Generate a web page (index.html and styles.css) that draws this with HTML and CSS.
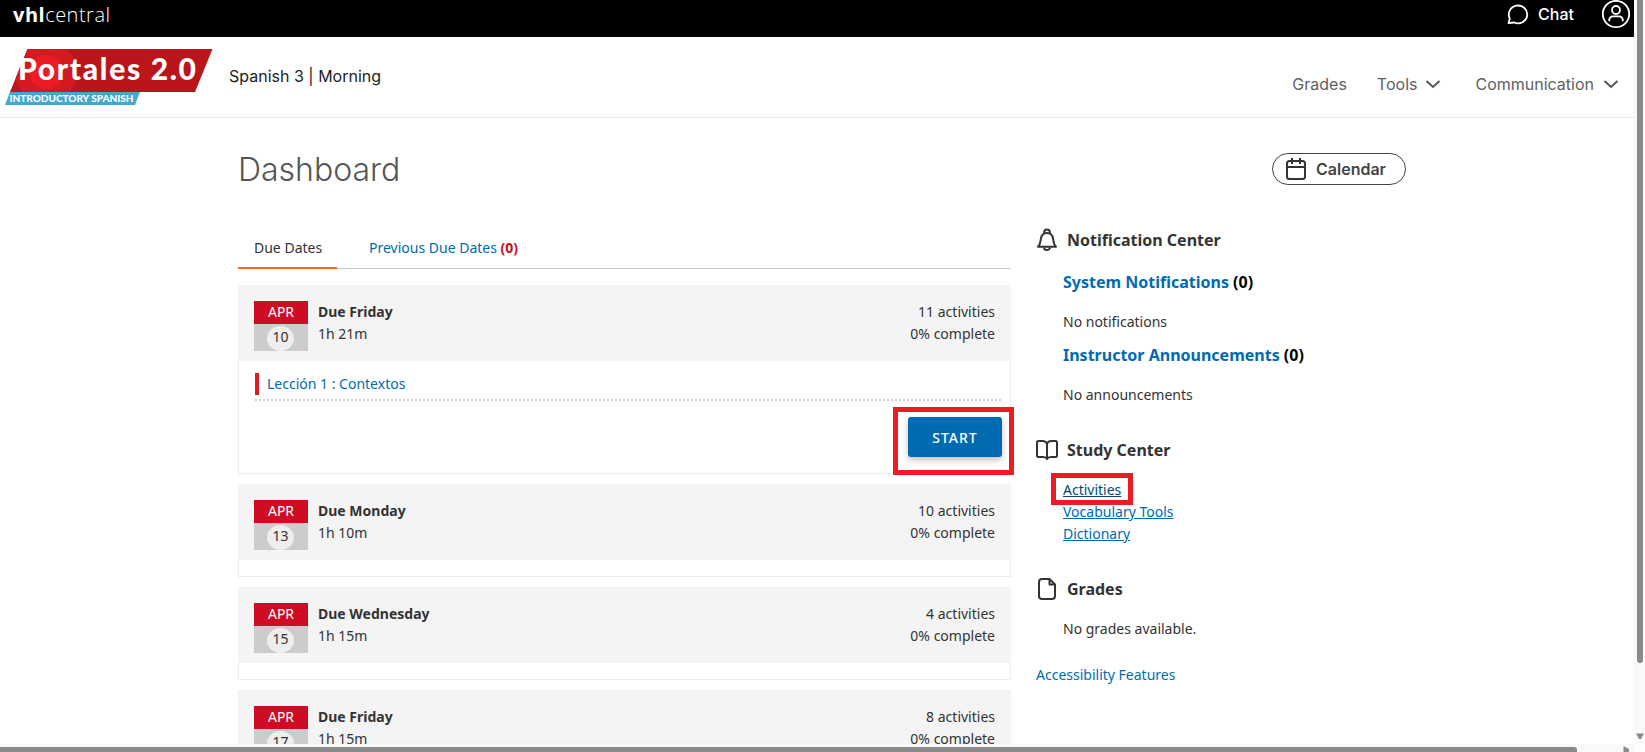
FILE: index.html
```html
<!DOCTYPE html>
<html lang="en">
<head>
    <meta charset="UTF-8">
    <meta name="viewport" content="width=device-width, initial-scale=1.0">
    <title>Dashboard | vhlcentral</title>
    <link rel="stylesheet" href="styles.css">
</head>
<body>
    <div class="viewport">
        <div class="topbar">
            <div class="brand"><b>vhl</b>central</div>
            <div class="topbar-right">
                <svg class="chat-icon" width="22" height="22" viewBox="0 0 22 22">
                    <path d="M1.5 20.2 L2.8 15.4 A9.2 8.9 0 1 1 7.2 19.5 Z"/>
                </svg>
                <span class="chat">Chat</span>
                <svg class="user-icon" width="30" height="30" viewBox="0 0 30 30">
                    <circle cx="15" cy="15" r="13.2"/>
                    <circle cx="15" cy="11" r="4"/>
                    <path d="M8.2 22.3 V21 a4 4 0 0 1 4-3.7 h5.6 a4 4 0 0 1 4 3.7 V22.3"/>
                </svg>
            </div>
        </div>

        <header class="header">
            <svg class="logo" width="208" height="56" viewBox="0 0 208 56">
                <defs>
                    <clipPath id="logo-shape"><path d="M22.5 0 H207.5 L190 43 H5 Z"/></clipPath>
                </defs>
                <g clip-path="url(#logo-shape)">
                    <rect width="208" height="43" fill="#b9151b"/>
                    <circle cx="41" cy="23" r="31" fill="#d31a20"/>
                    <circle cx="41" cy="23" r="17" fill="#ed1c24"/>
                </g>
                <path d="M5 43 H135 L130 56 H0 Z" fill="#43a9cc"/>
                <text class="logo-title" x="13" y="30.5" textLength="178">Portales 2.0</text>
                <text class="logo-sub" x="4.5" y="53" textLength="124" lengthAdjust="spacingAndGlyphs">INTRODUCTORY SPANISH</text>
            </svg>
            <div class="course">Spanish 3 | Morning</div>
            <nav class="nav">
                <a>Grades</a>
                <a class="tools">Tools <svg class="chevron" width="16" height="10" viewBox="0 0 16 10"><path d="M1.5 2 L8 8 L14.5 2"/></svg></a>
                <a>Communication <svg class="chevron" width="16" height="10" viewBox="0 0 16 10"><path d="M1.5 2 L8 8 L14.5 2"/></svg></a>
            </nav>
        </header>

        <div class="page">
            <div class="page-head">
                <h1>Dashboard</h1>
                <button class="calendar">
                    <svg width="22" height="24" viewBox="0 0 22 24">
                        <rect x="2" y="4" width="18" height="18" rx="2.5"/>
                        <path d="M2 10 H20 M7 1 V7 M15 1 V7"/>
                    </svg>
                    Calendar
                </button>
            </div>

            <div class="columns">
                <main class="due">
                    <div class="tabs">
                        <div class="tab active">Due Dates</div>
                        <div class="tab">Previous Due Dates <b>(0)</b></div>
                    </div>

                    <section class="card">
                        <div class="card-head">
                            <div class="date"><div class="month">APR</div><div class="day"><span>10</span></div></div>
                            <div class="info"><b>Due Friday</b><br>1h 21m</div>
                            <div class="stats">11 activities<br>0% complete</div>
                        </div>
                        <div class="card-body open">
                            <div class="lesson"><a>Lección 1 : Contextos</a></div>
                            <div class="start-wrap">
                                <button class="start">START</button>
                                <div class="marker marker-start"></div>
                            </div>
                        </div>
                    </section>

                    <section class="card">
                        <div class="card-head">
                            <div class="date"><div class="month">APR</div><div class="day"><span>13</span></div></div>
                            <div class="info"><b>Due Monday</b><br>1h 10m</div>
                            <div class="stats">10 activities<br>0% complete</div>
                        </div>
                        <div class="card-body"></div>
                    </section>

                    <section class="card">
                        <div class="card-head">
                            <div class="date"><div class="month">APR</div><div class="day"><span>15</span></div></div>
                            <div class="info"><b>Due Wednesday</b><br>1h 15m</div>
                            <div class="stats">4 activities<br>0% complete</div>
                        </div>
                        <div class="card-body"></div>
                    </section>

                    <section class="card">
                        <div class="card-head">
                            <div class="date"><div class="month">APR</div><div class="day"><span>17</span></div></div>
                            <div class="info"><b>Due Friday</b><br>1h 15m</div>
                            <div class="stats">8 activities<br>0% complete</div>
                        </div>
                        <div class="card-body"></div>
                    </section>
                </main>

                <aside class="sidebar">
                    <h2>
                        <svg width="22" height="24" viewBox="0 0 22 24">
                            <path d="M2 18.8 C4.5 16.5 4.3 14 4.8 11 C5.3 7.5 7.5 5 11 5 C14.5 5 16.7 7.5 17.2 11 C17.7 14 17.5 16.5 20 18.8 Z"/>
                            <path d="M8.2 5.3 V4 a2.8 2.6 0 0 1 5.6 0 V5.3 M8 19.5 a3 2.6 0 0 0 6 0"/>
                        </svg>
                        Notification Center
                    </h2>
                    <div class="section notices">
                        <h3><a>System Notifications</a> (0)</h3>
                        <p>No notifications</p>
                        <h3><a>Instructor Announcements</a> (0)</h3>
                        <p>No announcements</p>
                    </div>

                    <h2>
                        <svg width="22" height="24" viewBox="0 0 22 24">
                            <path d="M11 5.5 C10 3.5 8.5 3 6.5 3 H2.5 Q1 3 1 4.5 V17.5 Q1 19 2.5 19 H7 Q10 19 11 21 Q12 19 15 19 H19.5 Q21 19 21 17.5 V4.5 Q21 3 19.5 3 H15.5 C13.5 3 12 3.5 11 5.5 V20.5"/>
                        </svg>
                        Study Center
                    </h2>
                    <ul class="section links">
                        <li><a class="hovered">Activities</a><div class="marker marker-activities"></div></li>
                        <li><a>Vocabulary Tools</a></li>
                        <li><a>Dictionary</a></li>
                    </ul>

                    <h2>
                        <svg width="22" height="24" viewBox="0 0 22 24">
                            <path d="M6 2 H13.5 L19 7.5 V19 a3 3 0 0 1 -3 3 H6 a3 3 0 0 1 -3 -3 V5 a3 3 0 0 1 3 -3 Z M13.5 2.5 V7.5 H18.5"/>
                        </svg>
                        Grades
                    </h2>
                    <div class="section grades">
                        <p>No grades available.</p>
                    </div>
                    <a class="accessibility">Accessibility Features</a>
                </aside>
            </div>
        </div>
    </div>

    <div class="scroll-y">
        <div class="thumb-y"></div>
        <svg class="arrow-y" width="10" height="7" viewBox="0 0 10 7"><path d="M1 0.5 H9 L6 6 H4 Z"/></svg>
    </div>
    <div class="scroll-x">
        <div class="thumb-x"></div>
        <svg class="arrow-x" width="7" height="8" viewBox="0 0 7 8"><path d="M0.5 0 L6 3 V5.5 L3 8 H0.5 Z"/></svg>
    </div>
</body>
</html>
```

FILE: styles.css
```css
* {
    box-sizing: border-box;
}

body {
    margin: 0;
    height: 752px;
    overflow: hidden;
    display: grid;
    grid-template-columns: 1634px 11px;
    grid-template-rows: 744px 8px;
    background: #fefefe;
    color: #333;
    font-family: 'Noto Sans', 'Open Sans', sans-serif;
    font-size: 14px;
    line-height: 22px;
}

a {
    color: #006bb1;
}

.viewport {
    overflow: hidden;
    background: #fff;
}

/* Top bar */
.topbar {
    height: 37px;
    padding: 0 3px 0 13px;
    display: flex;
    justify-content: space-between;
    background: #000;
    color: #fff;
}

.brand {
    font-family: 'Open Sans', sans-serif;
    font-size: 20px;
    font-weight: 300;
    line-height: 30px;
    letter-spacing: 0.5px;
}

.brand b {
    font-weight: 700;
}

.topbar-right {
    display: flex;
    align-items: center;
    height: 28px;
    font-family: Inter, sans-serif;
    font-size: 16px;
    font-weight: 500;
}

.topbar svg {
    fill: none;
    stroke: #fff;
    stroke-width: 1.8;
    stroke-linejoin: round;
}

.chat {
    margin: 0 27px 0 9px;
}

/* Header */
.header {
    height: 81px;
    padding: 12px 15px 0 5px;
    display: flex;
    align-items: flex-start;
    border-bottom: 1px solid #e8e8e8;
    font-family: Inter, sans-serif;
    font-size: 16px;
}

.logo text {
    fill: #fff;
    font-family: Lato, sans-serif;
    font-weight: 900;
}

.logo-title {
    font-size: 30px;
}

.logo-sub {
    font-size: 10px;
}

.course {
    margin: 16px 0 0 16px;
    color: #1d1d1d;
}

.nav {
    display: flex;
    gap: 30px;
    margin: 24px 0 0 auto;
}

.nav a {
    display: flex;
    align-items: center;
    gap: 9px;
    color: #616161;
}

.nav .tools {
    margin-right: 4px;
    gap: 8px;
}

.chevron {
    fill: none;
    stroke: #555;
    stroke-width: 2;
}

/* Page */
.page {
    width: 1168px;
    margin-left: 238px;
}

.page-head {
    height: 110px;
    padding-top: 35px;
    display: flex;
    justify-content: space-between;
    align-items: flex-start;
}

h1 {
    margin: 0;
    color: #555;
    font-family: Inter, sans-serif;
    font-size: 32px;
    font-weight: 300;
    line-height: 33px;
}

.calendar {
    width: 134px;
    height: 32px;
    padding: 0 0 0 12px;
    display: flex;
    align-items: center;
    gap: 9px;
    border: 1px solid #444;
    border-radius: 16px;
    background: #fff;
    color: #444;
    font-family: Inter, sans-serif;
    font-size: 16px;
    font-weight: 600;
}

.calendar svg,
h2 svg {
    fill: none;
    stroke: #333;
    stroke-width: 2;
    stroke-linejoin: round;
}

.columns {
    display: flex;
    gap: 25px;
}

.due {
    width: 773px;
}

.tabs {
    display: flex;
    height: 41px;
    margin-bottom: 16px;
    border-bottom: 1px solid #ccc;
    white-space: nowrap;
}

.tab {
    height: 41px;
    padding: 9px 16px 0;
}

.tab.active {
    width: 99px;
    border-bottom: 2px solid #ff6428;
}

.tab + .tab {
    margin-left: 16px;
    color: #006bb1;
}

.tab b {
    color: #ce0d24;
}

/* Cards */
.card {
    margin-bottom: 10px;
}

.card-head {
    height: 76px;
    padding: 16px;
    display: flex;
    background: #f4f4f4;
}

.date {
    width: 54px;
    height: 50px;
    margin-right: 10px;
    text-align: center;
}

.month {
    height: 23px;
    background: #ce0d24;
    color: #fff;
}

.day {
    height: 27px;
    padding-top: 2px;
    background: #ccc;
}

.day span {
    display: block;
    width: 27px;
    height: 25px;
    margin: 0 auto 0 13px;
    border-radius: 50%;
    background: #eee;
}

.stats {
    margin-left: auto;
    text-align: right;
}

.card-body {
    height: 17px;
    border: 1px solid #eee;
    border-top: 0;
}

.card-body.open {
    height: 113px;
    padding: 12px 8px 0 16px;
}

/* square dots, border-style dotted draws them round */
.lesson {
    padding-bottom: 6px;
    background: repeating-linear-gradient(to right, #ccc 0 2px, #fff 2px 4px) left bottom / 100% 2px no-repeat;
}

.lesson a {
    display: block;
    padding-left: 8px;
    border-left: 4px solid #e31b23;
    background: #fff;
}

.start-wrap {
    position: relative;
    display: flex;
    justify-content: flex-end;
    padding-top: 16px;
}

.start {
    width: 94px;
    height: 40px;
    padding: 0;
    border: 0;
    border-radius: 3px;
    background: #006bb1;
    box-shadow: 0 3px 6px rgba(0, 0, 0, 0.25);
    color: #fff;
    font-family: 'Noto Sans', sans-serif;
    font-size: 14px;
    font-weight: 500;
    letter-spacing: 1px;
}

/* Red highlight boxes */
.marker {
    position: absolute;
    border: 5px solid #ed1c24;
}

.marker-start {
    top: 6px;
    right: -12px;
    width: 121px;
    height: 68px;
}

.marker-activities {
    top: -6px;
    left: -12px;
    width: 82px;
    height: 32px;
}

/* Sidebar */
.sidebar {
    width: 370px;
}

h2 {
    display: flex;
    align-items: center;
    gap: 9px;
    height: 24px;
    margin: 0;
    font-size: 16px;
    font-weight: 700;
}

.section {
    margin: 0;
    padding: 0 0 0 27px;
}

h3 {
    margin: 0;
    color: #000;
    font-size: 16px;
    font-weight: 700;
}

.section p {
    margin: 0;
}

.notices {
    height: 186px;
    padding-top: 19px;
}

.notices p {
    padding: 18px 0 11px;
}

.links {
    height: 115px;
    padding-top: 17px;
    list-style: none;
}

.links li {
    position: relative;
}

.links a {
    text-decoration: underline;
}

.links .hovered {
    color: #004b7c;
}

.grades {
    height: 63px;
    padding-top: 17px;
}

.accessibility {
    display: block;
}

/* Scrollbars */
.scroll-y {
    height: 744px;
    padding-left: 3px;
    background: #f9f9f9;
}

.thumb-y {
    width: 6px;
    height: 663px;
    border-radius: 0 0 3px 3px;
    background: #8a8a8a;
}

.arrow-y {
    display: block;
    margin: 70px 0 0 -2px;
    fill: #8a8a8a;
}

.scroll-x {
    height: 8px;
    display: flex;
    justify-content: space-between;
    padding-right: 4px;
    background: #f9f9f9;
}

.thumb-x {
    width: 1577px;
    height: 5px;
    margin-top: 3px;
    border-radius: 0 3px 0 0;
    background: #8a8a8a;
}

.arrow-x {
    margin-top: 2px;
    fill: #8a8a8a;
}
```
